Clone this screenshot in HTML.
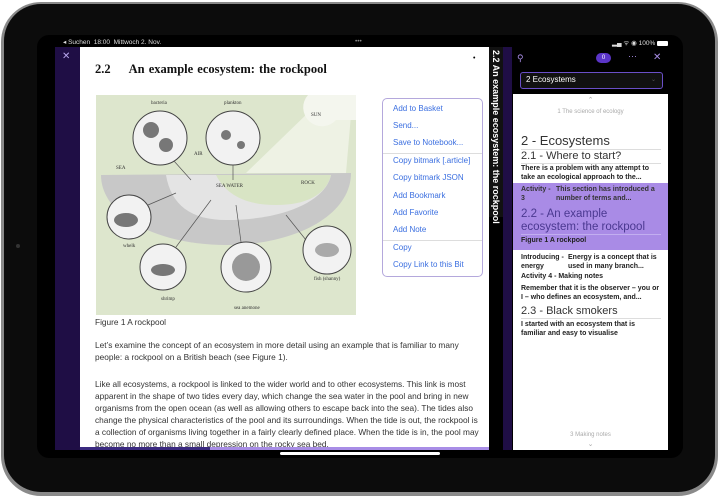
<!DOCTYPE html>
<html><head><meta charset="utf-8"><style>
*{margin:0;padding:0;box-sizing:border-box}
body{width:719px;height:500px;background:#fff;position:relative;overflow:hidden;font-family:"Liberation Sans",sans-serif}
.frame{position:absolute;left:1px;top:2px;width:717px;height:494px;border-radius:40px;background:#8a8a8a;}
.frame2{position:absolute;left:4px;top:4px;width:711px;height:488px;border-radius:37px;background:#0c0c0c;}
.screen{position:absolute;left:37px;top:35px;width:646px;height:423px;border-radius:12px;background:#000;overflow:hidden}
.abs{position:absolute}
.status{color:#ddd;font-size:6.5px;top:3px}
.lside{left:18px;top:12px;width:25px;height:403px;background:#1f0e45}
.content{left:43px;top:12px;width:409px;height:403px;background:#fff;overflow:hidden}
h1{position:absolute;left:15px;top:15px;font-family:"Liberation Serif",serif;font-size:12.5px;font-weight:bold;color:#111;word-spacing:1px}
h1 span{margin-right:18px}
.p{position:absolute;left:15px;font-size:8.3px;line-height:12px;color:#333;width:372px}
.menu{left:345px;top:63px;width:101px;height:179px;border:1px solid #b4a8dc;border-radius:5px;background:#fff}
.menu div{position:absolute;left:10px;font-size:8px;color:#3b6fe0}
.menu hr{position:absolute;left:0;width:100%;border:0;border-top:1px solid #ddd}
.vstrip{left:452px;top:12px;width:14px;height:170px;background:#111}
.vtext{position:absolute;left:2px;top:3px;writing-mode:vertical-rl;color:#fff;font-size:9px;font-weight:bold;white-space:nowrap}
.rp{left:466px;top:12px;width:180px;height:403px;background:#000}
.list{left:476px;top:59px;width:155px;height:356px;background:#fff;overflow:hidden}
.list .it{position:absolute;left:8px;width:140px;font-size:7px;color:#222;line-height:8.5px;font-weight:bold}
.big{position:absolute;left:8px;width:140px;color:#333;font-size:11px;border-bottom:1px solid #ddd;line-height:13px}
</style></head><body>
<div class="frame"></div><div class="frame2"></div>
<div class="screen">
 <div class="abs status" style="left:26px">◂ Suchen&nbsp; 18:00&nbsp; Mittwoch 2. Nov.</div>
 <div class="abs status" style="left:318px;color:#888">•••</div>
 <div class="abs status" style="left:575px">▂▄ ᯤ ◉ 100% <span style="display:inline-block;width:11px;height:5px;background:#fff;border-radius:1px;vertical-align:middle"></span></div>
 <div class="abs lside"><div style="color:#b9a7ee;font-size:10px;position:absolute;left:7px;top:4px">✕</div></div>
 <div class="abs content">
  <h1><span>2.2</span>An example ecosystem: the rockpool</h1>
  <div class="abs" style="left:393px;top:8px;font-size:7px">•</div>
  <svg class="abs" style="left:16px;top:48px" width="260" height="220" viewBox="0 0 260 220">
   <rect width="260" height="220" fill="#dde6cd"/>
   <path d="M150 78 L215 15 L255 20 L250 78Z" fill="#eef2e4"/>
   <path d="M212 0 A16 16 0 0 0 240 25 L260 25 L260 0Z" fill="#f4f6ee"/>
   <path d="M5 80 L255 78 C255 120 200 150 130 150 C60 150 5 120 5 80Z" fill="#c8c8c8"/>
   <path d="M70 80 L235 80 C230 105 190 125 130 125 C95 125 75 110 70 80Z" fill="#e4e4e4"/>
   <path d="M120 80 L235 80 C230 100 210 110 180 110 C150 110 130 100 120 80Z" fill="#d8e4c4"/>
   <g fill="#f2f2f2" stroke="#444" stroke-width="1">
    <circle cx="64" cy="43" r="27"/><circle cx="137" cy="43" r="27"/>
    <circle cx="33" cy="122" r="22"/><circle cx="67" cy="172" r="23"/>
    <circle cx="150" cy="172" r="25"/><circle cx="231" cy="155" r="24"/>
   </g>
   <g fill="#777"><circle cx="55" cy="35" r="8"/><circle cx="70" cy="50" r="7"/><circle cx="130" cy="40" r="5"/><circle cx="145" cy="50" r="4"/><ellipse cx="30" cy="125" rx="12" ry="7"/><ellipse cx="67" cy="175" rx="12" ry="6"/><circle cx="150" cy="172" r="14" fill="#999"/><ellipse cx="231" cy="155" rx="12" ry="7" fill="#aaa"/></g>
   <g stroke="#555" stroke-width="0.7"><line x1="78" y1="66" x2="95" y2="85"/><line x1="137" y1="70" x2="137" y2="85"/><line x1="52" y1="110" x2="80" y2="98"/><line x1="80" y1="152" x2="115" y2="105"/><line x1="145" y1="147" x2="140" y2="110"/><line x1="210" y1="145" x2="190" y2="120"/></g>
   <g font-family="Liberation Serif" font-size="5" fill="#333"><text x="55" y="9">bacteria</text><text x="128" y="9">plankton</text><text x="215" y="21">SUN</text><text x="98" y="60">AIR</text><text x="20" y="74">SEA</text><text x="120" y="92">SEA WATER</text><text x="205" y="89">ROCK</text><text x="27" y="152">whelk</text><text x="65" y="205">shrimp</text><text x="138" y="214">sea anemone</text><text x="218" y="185">fish (shanny)</text></g>
  </svg>
  <div class="p" style="top:269px">Figure 1 A rockpool</div>
  <div class="p" style="top:292px">Let’s examine the concept of an ecosystem in more detail using an example that is familiar to many people: a rockpool on a British beach (see Figure 1).</div>
  <div class="p" style="top:331px;width:386px">Like all ecosystems, a rockpool is linked to the wider world and to other ecosystems. This link is most apparent in the shape of two tides every day, which change the sea water in the pool and bring in new organisms from the open ocean (as well as allowing others to escape back into the sea). The tides also change the physical characteristics of the pool and its surroundings. When the tide is out, the rockpool is a collection of organisms living together in a fairly clearly defined place. When the tide is in, the pool may become no more than a small depression on the rocky sea bed.</div>
  <div class="abs" style="left:0;top:400px;width:409px;height:3px;background:#a88de6"></div>
  <div class="abs" style="left:0;top:400px;width:130px;height:3px;background:#3b2a80"></div>
 </div>
 <div class="abs menu">
  <div style="top:5px">Add to Basket</div><div style="top:22px">Send...</div><div style="top:39px">Save to Notebook...</div>
  <hr style="top:54px">
  <div style="top:57px">Copy bitmark [.article]</div><div style="top:74px">Copy bitmark JSON</div><div style="top:92px">Add Bookmark</div><div style="top:109px">Add Favorite</div><div style="top:126px">Add Note</div>
  <hr style="top:141px">
  <div style="top:144px">Copy</div><div style="top:161px">Copy Link to this Bit</div>
 </div>
 <div class="abs vstrip"><div class="vtext">2.2 An example ecosystem: the rockpool</div></div>
 <div class="abs rp">
  <div class="abs" style="left:0;top:0;width:9px;height:403px;background:#1f0e45"></div>
  <div class="abs" style="left:14px;top:6px;color:#a88de6;font-size:9px">⚲</div>
  <div class="abs" style="left:93px;top:6px;width:15px;height:10px;border-radius:5px;background:#5b35c8;color:#fff;font-size:6px;text-align:center;line-height:10px">0</div>
  <div class="abs" style="left:125px;top:4px;color:#a88de6;font-size:9px">···</div>
  <div class="abs" style="left:150px;top:5px;color:#a88de6;font-size:10px">✕</div>
  <div class="abs" style="left:17px;top:25px;width:143px;height:17px;border:1.5px solid #6a4fc8;border-radius:3px;background:#111;color:#fff;font-size:8px;line-height:14px;padding-left:5px">2 Ecosystems<span style="position:absolute;right:6px;color:#555;font-size:6px">⌄</span></div>
 </div>
 <div class="abs list">
  <div class="abs" style="left:0;top:2px;width:155px;text-align:center;color:#aaa;font-size:7px">⌃</div>
  <div class="abs" style="left:0;top:15px;width:155px;text-align:center;color:#aaa;font-size:6px">1 The science of ecology</div>
  <div class="big" style="top:39px;font-size:13px;line-height:16px">2 - Ecosystems</div>
  <div class="big" style="top:56px;font-size:11px">2.1 - Where to start?</div>
  <div class="it" style="top:71px">There is a problem with any attempt to take an ecological approach to the...</div>
  <div class="abs" style="left:0;top:89px;width:155px;height:67px;background:#a98be6"></div>
  <div class="it" style="top:92px;color:#333">Activity -<br>3</div><div class="it" style="top:92px;left:43px;width:110px;color:#333">This section has introduced a number of terms and...</div>
  <div class="big" style="top:114px;font-size:11.5px;line-height:13px;border-color:#c2aef0;color:#4a3890">2.2 - An example ecosystem: the rockpool</div>
  <div class="it" style="top:143px">Figure 1 A rockpool</div>
  <div class="it" style="top:160px">Introducing -<br>energy</div><div class="it" style="top:160px;left:55px;width:98px">Energy is a concept that is used in many branch...</div>
  <div class="it" style="top:179px">Activity 4 - Making notes</div>
  <div class="it" style="top:191px">Remember that it is the observer – you or I – who defines an ecosystem, and...</div>
  <div class="big" style="top:211px">2.3 - Black smokers</div>
  <div class="it" style="top:227px">I started with an ecosystem that is familiar and easy to visualise</div>
  <div class="abs" style="left:0;top:338px;width:155px;text-align:center;color:#aaa;font-size:6px">3 Making notes</div>
  <div class="abs" style="left:0;top:346px;width:155px;text-align:center;color:#aaa;font-size:7px">⌄</div>
 </div>
 <div class="abs" style="left:243px;top:417px;width:160px;height:3px;border-radius:2px;background:#fff"></div>
</div>
<div class="abs" style="left:16px;top:244px;width:4px;height:4px;border-radius:2px;background:#333"></div>
</body></html>
